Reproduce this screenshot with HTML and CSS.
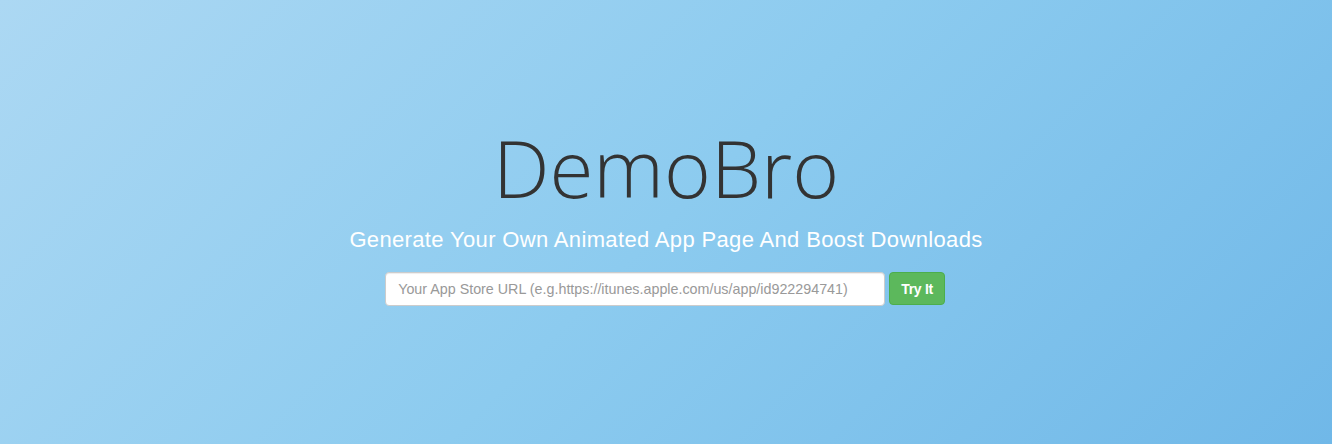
FILE: index.html
```html
<!DOCTYPE html>
<html>
<head>
<meta charset="utf-8">
<link rel="stylesheet" href="styles.css">
</head>
<body>
<main class="hero">
  <h1 class="title">DemoBro</h1>
  <p class="tagline">Generate Your Own Animated App Page And Boost Downloads</p>
  <form class="url-form">
    <input class="url-input" type="text" placeholder="Your App Store URL (e.g.https://itunes.apple.com/us/app/id922294741)">
    <button class="try-btn" type="button">Try It</button>
  </form>
</main>
</body>
</html>
```
FILE: styles.css
```css
html, body {
  margin: 0;
  padding: 0;
  height: 100%;
}
body {
  background: linear-gradient(135deg, #acd8f3 0%, #8ccbef 50%, #70b8e8 100%);
  font-family: "Liberation Sans", Arial, sans-serif;
}
.hero {
  height: 444px;
  display: flex;
  flex-direction: column;
  align-items: center;
  padding-top: 119px;
  box-sizing: border-box;
}
.title {
  margin: 0;
  font-family: "Open Sans", sans-serif;
  font-weight: 300;
  font-size: 80px;
  line-height: 96px;
  color: #333;
}
.tagline {
  margin: 0;
  margin-top: 10px;
  font-size: 22px;
  letter-spacing: 0.35px;
  line-height: 30px;
  color: #fff;
}
.url-form {
  display: flex;
  gap: 4px;
  margin-top: 17px;
  margin-left: -2px;
}
.url-input {
  width: 500px;
  height: 34px;
  box-sizing: border-box;
  border: 1px solid #ccc;
  border-radius: 4px;
  padding: 6px 12px;
  font-family: "Liberation Sans", Arial, sans-serif;
  font-size: 14.3px;
  color: #555;
  background: #fff;
  box-shadow: inset 0 1px 1px rgba(0,0,0,0.075);
}
.url-input::placeholder {
  color: #999;
}
.try-btn {
  height: 33px;
  padding: 0 11px;
  border: 1px solid #4cae4c;
  border-radius: 4px;
  background: #5cb85c;
  color: #fff;
  font-family: "Liberation Sans", Arial, sans-serif;
  font-weight: bold;
  font-size: 14px;
  letter-spacing: -0.3px;
  box-sizing: border-box;
}
```
